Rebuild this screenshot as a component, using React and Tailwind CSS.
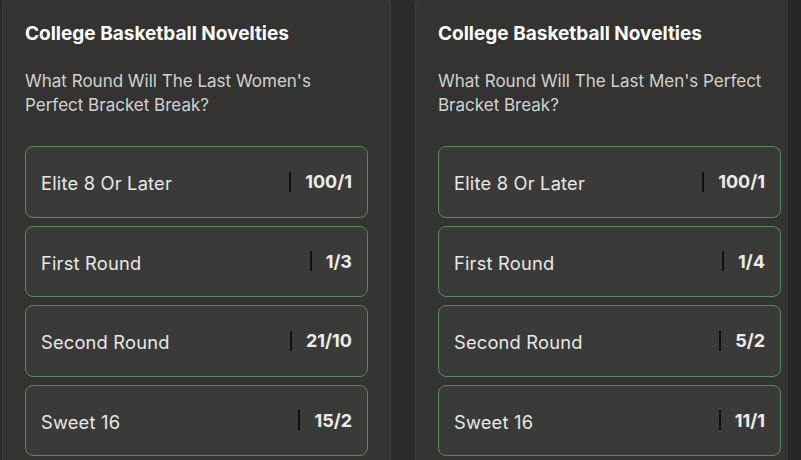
import React from 'react';

const markets = [
  {
    title: 'College Basketball Novelties',
    question: "What Round Will The Last Women's Perfect Bracket Break?",
    options: [
      { label: 'Elite 8 Or Later', odds: '100/1' },
      { label: 'First Round', odds: '1/3' },
      { label: 'Second Round', odds: '21/10' },
      { label: 'Sweet 16', odds: '15/2' },
    ],
  },
  {
    title: 'College Basketball Novelties',
    question: "What Round Will The Last Men's Perfect Bracket Break?",
    options: [
      { label: 'Elite 8 Or Later', odds: '100/1' },
      { label: 'First Round', odds: '1/4' },
      { label: 'Second Round', odds: '5/2' },
      { label: 'Sweet 16', odds: '11/1' },
    ],
  },
];

function OptionRow({ label, odds }) {
  return (
    <button
      type="button"
      className="flex h-[71.5px] w-full items-center justify-between rounded-lg border-[1.5px] border-[#558c5b] bg-[#3a3b39] pl-[15px] pr-[15px] text-left"
    >
      <span className="mt-[4px] text-[18.3px] tracking-[0.2px] text-[#e8e8e6]">{label}</span>
      <span className="flex items-center gap-[14px]">
        <span className="h-[20px] w-[2px] bg-[#111]" />
        <span className="text-[18px] font-bold text-[#ececea]">{odds}</span>
      </span>
    </button>
  );
}

function MarketCard({ title, question, options }) {
  return (
    <section className="-mt-[8px] w-[389px] shrink-0 rounded-xl border border-[#3e3f3c] bg-[#333432] px-[22px] pt-[28px] pb-[40px]">
      <h2 className="text-[19px] font-bold leading-[26px] text-white">{title}</h2>
      <p className="mt-[22px] text-[17px] leading-[24px] text-[#d2d2d0]">{question}</p>
      <div className="mt-[29px] flex flex-col gap-[8px]">
        {options.map((o) => (
          <OptionRow key={o.label} {...o} />
        ))}
      </div>
    </section>
  );
}

export default function App() {
  return (
    <div
      className="relative h-[460px] w-[801px] overflow-hidden bg-[#2b2c2a]"
      style={{ fontFamily: 'Inter, "Noto Sans", sans-serif' }}
    >
      <div className="flex gap-[24px] pl-[2px]">
        {markets.map((m, i) => (
          <MarketCard key={i} {...m} />
        ))}
      </div>
      <div className="absolute inset-y-0 right-0 w-[13px] bg-[#262725]" />
    </div>
  );
}
